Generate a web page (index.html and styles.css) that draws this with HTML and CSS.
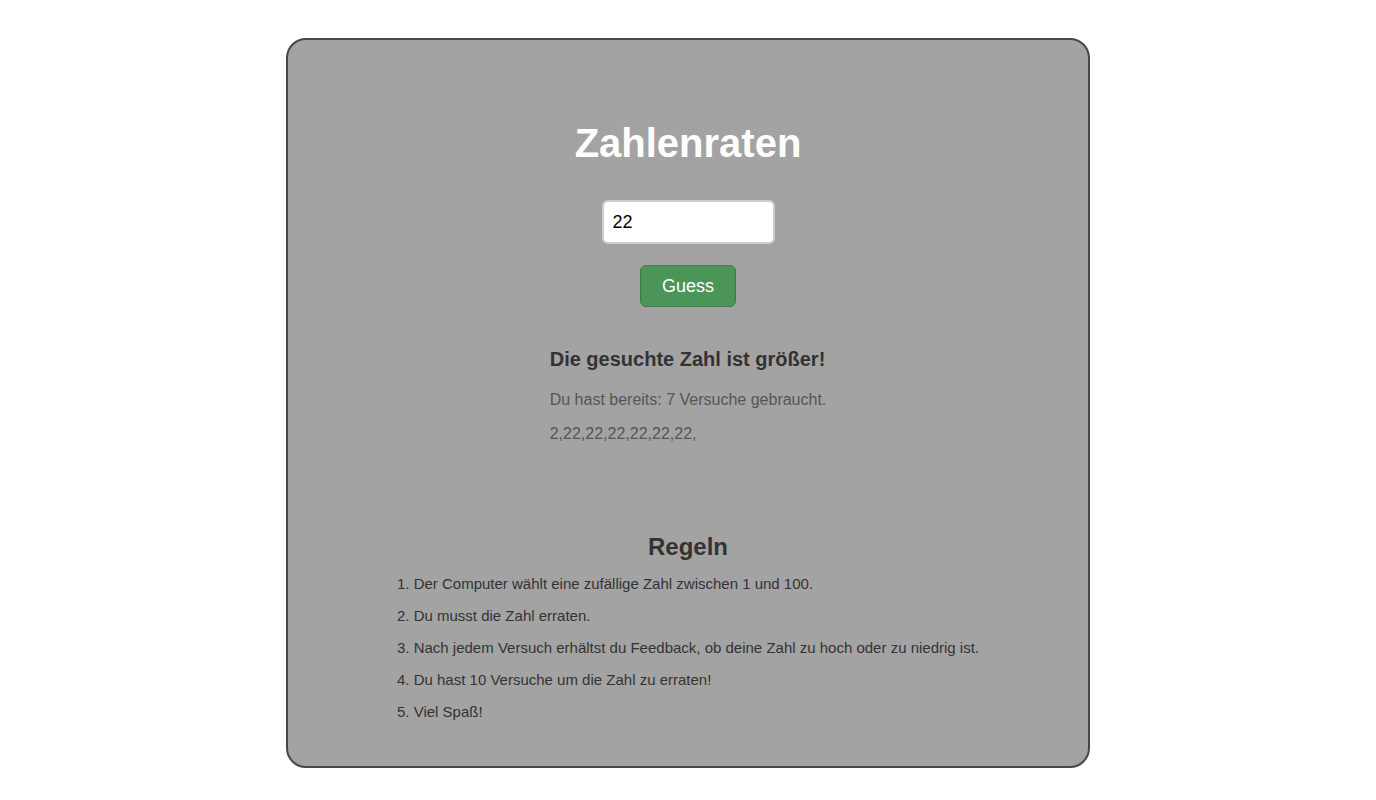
FILE: index.html
```html
<!DOCTYPE html>
<html lang="de">
<head>
<meta charset="utf-8">
<title>Zahlenraten</title>
<link rel="stylesheet" href="styles.css">
</head>
<body>
<main class="card">
  <h1 class="title">Zahlenraten</h1>
  <div class="form">
    <input class="guess-input" type="text" value="22">
    <button class="guess-btn" type="button">Guess</button>
  </div>
  <div class="result-wrap">
    <div class="result">
      <h3 class="result-head">Die gesuchte Zahl ist größer!</h3>
      <p class="result-text">Du hast bereits: 7 Versuche gebraucht.</p>
      <p class="result-text">2,22,22,22,22,22,22,</p>
    </div>
  </div>
  <section class="rules">
    <h2 class="rules-head">Regeln</h2>
    <ol class="rules-list">
      <li>Der Computer wählt eine zufällige Zahl zwischen 1 und 100.</li>
      <li>Du musst die Zahl erraten.</li>
      <li>Nach jedem Versuch erhältst du Feedback, ob deine Zahl zu hoch oder zu niedrig ist.</li>
      <li>Du hast 10 Versuche um die Zahl zu erraten!</li>
      <li>Viel Spaß!</li>
    </ol>
  </section>
</main>
</body>
</html>
```

FILE: styles.css
```css
* { box-sizing: border-box; }

html, body {
  margin: 0;
  padding: 0;
  background: #ffffff;
  font-family: "Liberation Sans", Arial, sans-serif;
}

.card {
  width: 804px;
  margin: 38px auto 0;
  background: #a3a3a3;
  border: 2px solid #474747;
  border-radius: 20px;
  padding: 80px 20px 46px;
  text-align: center;
}

.title {
  margin: 0;
  font-size: 40px;
  font-weight: bold;
  line-height: 46px;
  color: #ffffff;
}

.form {
  display: flex;
  flex-direction: column;
  align-items: center;
  gap: 21px;
  margin-top: 34px;
}

.guess-input {
  width: 173px;
  height: 44px;
  padding: 0 9px;
  border: 2px solid #cdcdcd;
  border-radius: 6px;
  background: #ffffff;
  font-family: "Liberation Sans", Arial, sans-serif;
  font-size: 18px;
  color: #000000;
  outline: none;
}

.guess-btn {
  height: 42px;
  padding: 0 21px;
  background: #4b9559;
  border: 1px solid #3d7a49;
  border-radius: 6px;
  color: #ffffff;
  font-family: "Liberation Sans", Arial, sans-serif;
  font-size: 18px;
}

.result-wrap {
  margin-top: 41px;
}

.result {
  display: inline-block;
  text-align: left;
}

.result-head {
  margin: 0 0 20px;
  font-size: 20px;
  line-height: 23px;
  font-weight: bold;
  color: #333333;
}

.result-text {
  margin: 0 0 16px;
  font-size: 16px;
  line-height: 18px;
  color: #555555;
}

.result-text:last-child {
  margin-bottom: 0;
}

.rules {
  margin-top: 90px;
}

.rules-head {
  margin: 0;
  font-size: 24px;
  line-height: 28px;
  font-weight: bold;
  color: #333333;
}

.rules-list {
  display: inline-flex;
  flex-direction: column;
  gap: 15px;
  margin: 14px 0 0;
  padding: 0;
  list-style-position: inside;
  text-align: left;
  font-size: 15px;
  line-height: 17px;
  color: #333333;
}

.rules-list li {
  display: list-item;
}
```
